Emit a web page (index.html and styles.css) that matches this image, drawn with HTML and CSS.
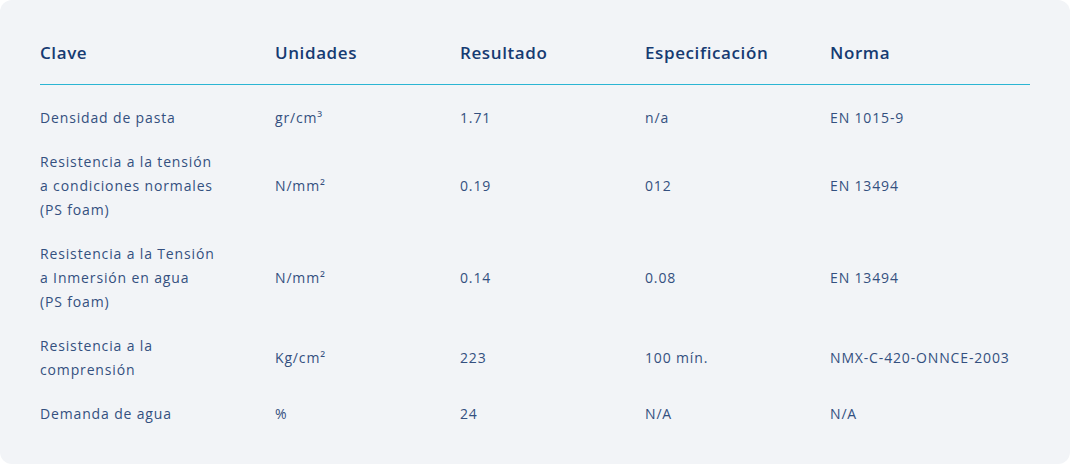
FILE: index.html
```html
<!DOCTYPE html>
<html lang="es">
<head>
<meta charset="utf-8">
<title>Especificaciones</title>
<link rel="stylesheet" href="styles.css">
</head>
<body>
<div class="card">
  <table class="spec">
    <colgroup>
      <col class="c1"><col class="c2"><col class="c3"><col class="c4"><col class="c5">
    </colgroup>
    <thead>
      <tr>
        <th>Clave</th>
        <th>Unidades</th>
        <th>Resultado</th>
        <th>Especificación</th>
        <th>Norma</th>
      </tr>
    </thead>
    <tbody>
      <tr>
        <td>Densidad de pasta</td>
        <td>gr/cm³</td>
        <td>1.71</td>
        <td>n/a</td>
        <td>EN 1015-9</td>
      </tr>
      <tr>
        <td>Resistencia a la tensión<br>a condiciones normales<br>(PS foam)</td>
        <td>N/mm²</td>
        <td>0.19</td>
        <td>012</td>
        <td>EN 13494</td>
      </tr>
      <tr>
        <td>Resistencia a la Tensión<br>a Inmersión en agua<br>(PS foam)</td>
        <td>N/mm²</td>
        <td>0.14</td>
        <td>0.08</td>
        <td>EN 13494</td>
      </tr>
      <tr>
        <td>Resistencia a la<br>comprensión</td>
        <td>Kg/cm²</td>
        <td>223</td>
        <td>100 mín.</td>
        <td>NMX-C-420-ONNCE-2003</td>
      </tr>
      <tr>
        <td>Demanda de agua</td>
        <td>%</td>
        <td>24</td>
        <td>N/A</td>
        <td>N/A</td>
      </tr>
    </tbody>
  </table>
</div>
</body>
</html>
```
FILE: styles.css
```css
html, body {
  margin: 0;
  padding: 0;
  background: #ffffff;
}

.card {
  box-sizing: border-box;
  width: 1070px;
  height: 464px;
  background: #f2f4f7;
  border-radius: 12px;
  padding: 41px 40px 0;
  font-family: "Open Sans", "Noto Sans", sans-serif;
}

.spec {
  width: 990px;
  border-collapse: collapse;
  table-layout: fixed;
}

.c1 { width: 235px; }
.c2 { width: 185px; }
.c3 { width: 185px; }
.c4 { width: 185px; }
.c5 { width: 200px; }

.spec th {
  text-align: left;
  font-size: 17px;
  font-weight: 600;
  line-height: 24px;
  color: #163b72;
  padding: 0 0 19px;
  border-bottom: 1px solid #2bb5d3;
  letter-spacing: 0.6px;
}

.spec td {
  text-align: left;
  vertical-align: middle;
  font-size: 14px;
  line-height: 24px;
  color: #34507f;
  padding: 10px 0;
  letter-spacing: 0.85px;
}

.spec tbody tr:first-child td {
  padding-top: 21px;
}
```
